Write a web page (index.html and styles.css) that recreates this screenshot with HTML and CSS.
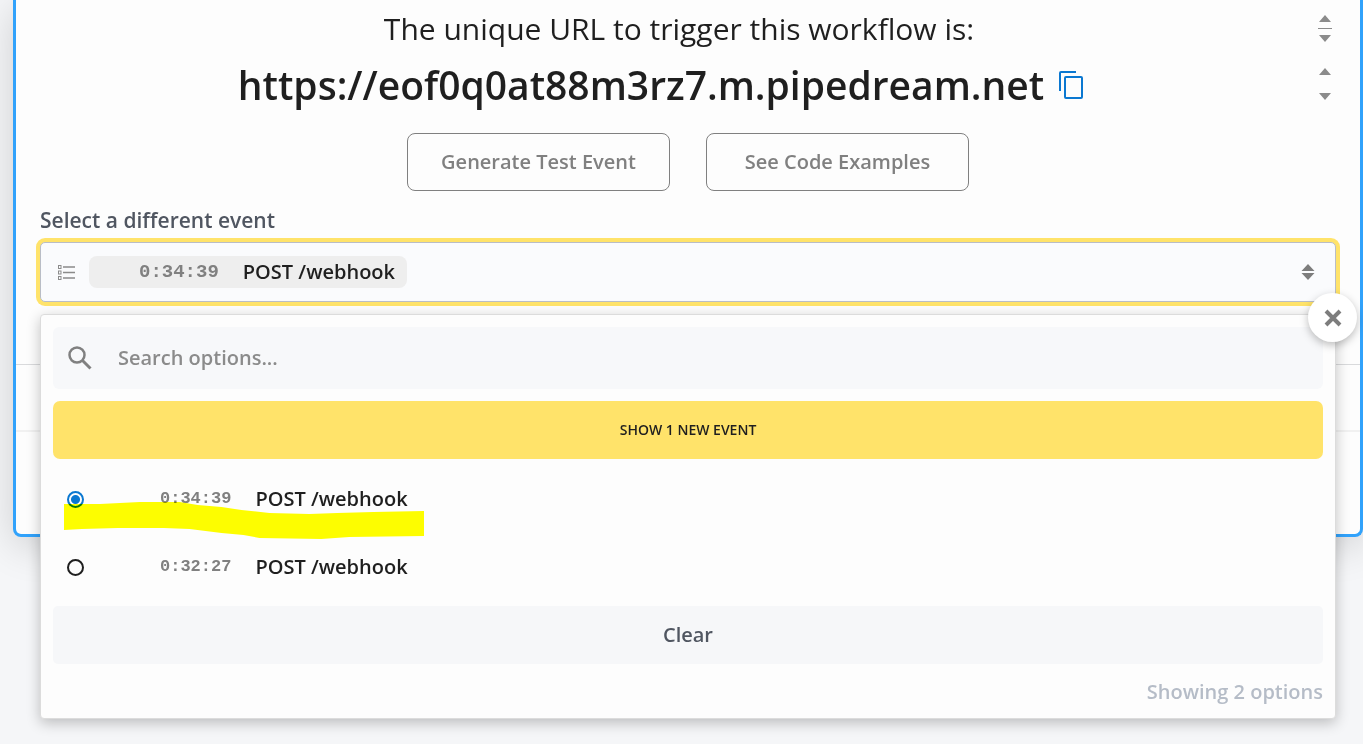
FILE: index.html
```html
<!DOCTYPE html>
<html lang="en">
<head>
  <meta charset="UTF-8">
  <meta name="viewport" content="width=device-width, initial-scale=1.0">
  <title>Workflow trigger</title>
  <link rel="stylesheet" href="styles.css">
</head>
<body>
  <main class="card">
    <section class="trigger">
      <div class="line">
        <p class="intro">The unique URL to trigger this workflow is:</p>
        <svg class="scroller" width="14" height="30" viewBox="0 0 14 30" aria-hidden="true">
          <path d="M7 1l6 7H1zM7 28l6-7H1z" fill="#8b8b8b"/>
          <path d="M0 14.500h14" stroke="#8b8b8b"/>
        </svg>
      </div>
      <div class="line">
        <h1 class="url">
          https://eof0q0at88m3rz7.m.pipedream.net
          <button class="copy" aria-label="Copy URL">
            <svg width="26" height="30" viewBox="0 0 26 30" fill="none" stroke="#0b78d1" stroke-width="2">
              <path d="M2 21V3q0-1 1-1h15"/>
              <rect x="7" y="7" width="17" height="21" rx="1"/>
            </svg>
          </button>
        </h1>
        <svg class="scroller" width="14" height="36" viewBox="0 0 14 36" aria-hidden="true">
          <path d="M7 1l6 7H1zM7 33l6-7H1z" fill="#8b8b8b"/>
        </svg>
      </div>
      <div class="actions">
        <button class="outline">Generate Test Event</button>
        <button class="outline">See Code Examples</button>
      </div>

      <label class="label" for="event">Select a different event</label>
      <div class="picker">
        <button class="select" id="event" aria-haspopup="listbox" aria-expanded="true">
          <svg width="17" height="15" viewBox="0 0 17 15" fill="none" stroke="#8b8b8b">
            <path d="M5 2h12M5 7.500h12M5 13h12" stroke-width="1.500"/>
            <rect x=".5" y=".5" width="2.500" height="3"/>
            <rect x=".5" y="6" width="2.500" height="3"/>
            <rect x=".5" y="11.500" width="2.500" height="3"/>
          </svg>
          <span class="chip"><span class="time">0:34:39</span>POST /webhook</span>
          <svg class="caret" width="14" height="18" viewBox="0 0 14 18" fill="#7d7d7d">
            <path d="M7 1l6.500 7H.5zM7 17l6.500-7H.5z"/>
          </svg>
        </button>

        <div class="dropdown">
          <button class="close" aria-label="Close">
            <svg width="18" height="18" viewBox="0 0 18 18" stroke="#7d7d7d" stroke-width="4">
              <path d="M2 2l14 14M16 2L2 16"/>
            </svg>
          </button>
          <div class="search">
            <svg width="24" height="24" viewBox="0 0 24 24" fill="none" stroke="#808080">
              <circle cx="9" cy="9" r="7.500" stroke-width="2.500"/>
              <path d="M14.500 14.500l8 8" stroke-width="3"/>
            </svg>
            <input type="text" placeholder="Search options..." aria-label="Search options">
          </div>
          <button class="new-event">SHOW 1 NEW EVENT</button>
          <div class="options">
            <label class="option">
              <input type="radio" name="event" checked>
              <span class="time">0:34:39</span>POST /webhook
            </label>
            <label class="option">
              <input type="radio" name="event">
              <span class="time">0:32:27</span>POST /webhook
            </label>
            <svg class="marker" width="360" height="38" viewBox="0 0 361 38" fill="#ffff00" aria-hidden="true">
              <path d="M0 3L36 3L76 1L116 1L134 4L158 6L178 9L206 12L246 13L274 12L310 11L361 10V35L286 36L258 38L196 37L180 34L158 32L126 28L100 27L54 27L18 28L0 29z"/>
            </svg>
          </div>
          <button class="clear">Clear</button>
          <p class="count">Showing 2 options</p>
        </div>
      </div>
    </section>
    <div class="divider"></div>
    <div class="footer"></div>
  </main>
</body>
</html>
```

FILE: styles.css
```css
:root {
  --bg: #f5f6f8;
  --card: #fdfdfd;
  --blue: #31a2fb;
  --link: #0b78d1;
  --yellow: #ffe36a;
  --text: #1f1f1f;
  --muted: #808080;
  --label: #505661;
}

* {
  box-sizing: border-box;
}

body {
  margin: 0;
  min-height: 100vh;
  font-family: "Open Sans", "Noto Sans", sans-serif;
  font-size: 20px;
  font-weight: 600;
  line-height: 28px;
  background: var(--bg);
  color: var(--text);
}

p, h1 {
  margin: 0;
}

button, input {
  font: inherit;
  color: inherit;
}

button {
  border: none;
  cursor: pointer;
}

svg {
  flex: none;
}

.card {
  margin-left: 13px;
  background: var(--card);
  border: 3px solid var(--blue);
  border-top: none;
  border-radius: 0 0 8px 8px;
  box-shadow: 0 8px 40px rgba(0, 0, 0, 0.16);
}

.trigger {
  padding: 1px 24px 62px;
}

.line {
  display: flex;
  align-items: center;
  height: 56px;
  padding-right: 4px;
}

.intro {
  flex: 1;
  text-align: center;
  font-size: 30px;
  font-weight: 400;
}

.url {
  flex: 1;
  display: flex;
  justify-content: center;
  align-items: center;
  gap: 14px;
  padding-right: 36px;
  font-size: 39px;
  font-weight: 600;
}

.copy {
  display: flex;
  padding: 0;
  background: none;
}

.actions {
  display: flex;
  justify-content: center;
  gap: 36px;
  margin: 20px 0 15px;
}

.outline {
  width: 263px;
  height: 58px;
  background: transparent;
  border: 1px solid var(--muted);
  border-radius: 8px;
  color: var(--muted);
}

.label {
  display: block;
  margin-bottom: 8px;
  font-size: 21px;
  color: var(--label);
}

.picker {
  position: relative;
}

.select {
  display: flex;
  align-items: center;
  width: 100%;
  height: 60px;
  padding: 0 20px 0 17px;
  background: #fafbfd;
  border: 1px solid #b9bdc6;
  border-radius: 5px;
  box-shadow: 0 0 0 4px var(--yellow);
}

.chip {
  display: flex;
  align-items: center;
  height: 32px;
  margin-left: 14px;
  padding: 0 12px 0 50px;
  background: #eeeeee;
  border-radius: 8px;
}

.time {
  font-family: "Liberation Mono", monospace;
  font-size: 19px;
  font-weight: 700;
  color: var(--muted);
  margin-right: 24px;
}

.caret {
  margin-left: auto;
}

.dropdown {
  position: absolute;
  top: 72px;
  left: 0;
  right: 0;
  padding: 12px;
  background: var(--card);
  border: 1px solid #dcdcdc;
  border-radius: 4px;
  box-shadow: 0 4px 14px rgba(0, 0, 0, 0.24);
}

.close {
  position: absolute;
  top: -22px;
  right: -22px;
  display: flex;
  justify-content: center;
  align-items: center;
  width: 49px;
  height: 49px;
  padding: 0;
  background: white;
  border-radius: 50%;
  box-shadow: 0 3px 8px rgba(0, 0, 0, 0.26);
}

.search {
  display: flex;
  align-items: center;
  gap: 26px;
  height: 62px;
  padding: 0 15px;
  background: #f7f8fa;
  border-radius: 6px;
}

.search input {
  flex: 1;
  padding: 0;
  border: none;
  outline: none;
  background: none;
}

.search input::placeholder {
  color: #8b8b8b;
}

.new-event {
  display: block;
  width: 100%;
  height: 58px;
  margin-top: 12px;
  background: var(--yellow);
  border-radius: 7px;
  font-size: 14px;
}

.options {
  position: relative;
  padding: 6px 0 5px;
}

.option {
  display: flex;
  align-items: center;
  height: 68px;
  padding-left: 14px;
}

.option input {
  appearance: none;
  width: 17px;
  height: 17px;
  margin: 0 76px 0 0;
  border: 2px solid var(--text);
  border-radius: 50%;
}

.option input:checked {
  border-color: var(--link);
  background: radial-gradient(circle, var(--link) 4px, transparent 5px);
}

.option .time {
  font-size: 17px;
}

/* highlighter stroke under the picked event */
.marker {
  position: absolute;
  top: 42px;
  left: 11px;
  mix-blend-mode: multiply;
  pointer-events: none;
}

.clear {
  display: block;
  width: 100%;
  height: 58px;
  background: #f6f7f9;
  border-radius: 5px;
  color: var(--label);
}

.count {
  margin-top: 14px;
  text-align: right;
  color: #b5bcc7;
}

.divider {
  height: 68px;
  border-top: 1px solid #d9dadc;
  border-bottom: 2px solid #f1f1f1;
}

.footer {
  height: 102px;
}
```
